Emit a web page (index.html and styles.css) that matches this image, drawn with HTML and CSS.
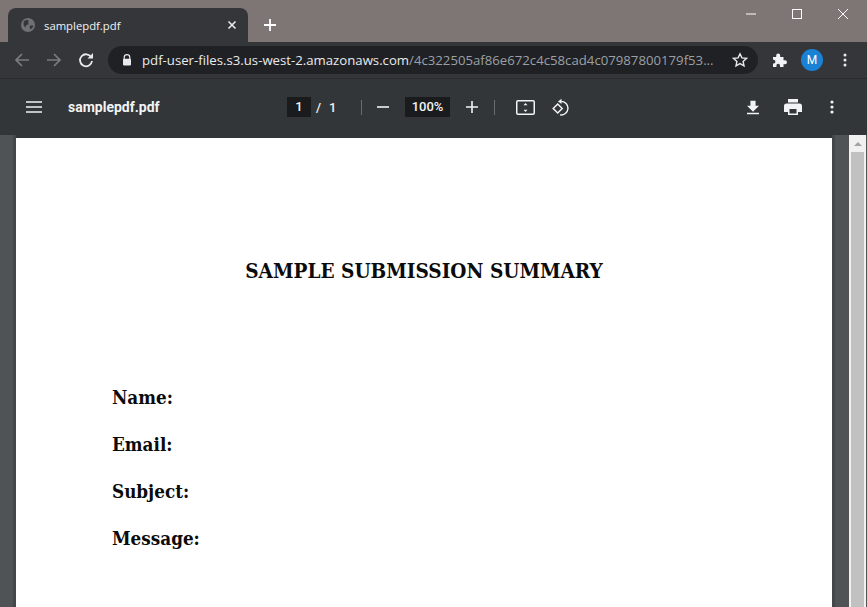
FILE: index.html
```html
<!DOCTYPE html>
<html>
<head>
    <title>samplepdf.pdf</title>
    <link rel="stylesheet" href="styles.css">
</head>
<body>
    <div class="titlebar">
        <div class="tab">
            <svg class="favicon" width="14" height="14" viewBox="0 0 16 16"><circle cx="8" cy="8" r="8" fill="#6f7175"/><path d="M3 4l3-2 3 1-1 2 1 2-3 1-1 3-2-3zM10 9l3-1 1 2-3 3-1-2z" fill="#35363a"/></svg>
            <span class="tab-title">samplepdf.pdf</span>
            <svg class="tab-close" width="10" height="10" viewBox="0 0 10 10"><path d="M1.500 1.500l7 7M8.500 1.500l-7 7" stroke="#e8eaed" stroke-width="1.600"/></svg>
        </div>
        <svg class="new-tab" width="12" height="12" viewBox="0 0 12 12"><path d="M6 0v12M0 6h12" stroke="#fff" stroke-width="1.800"/></svg>
        <div class="window-controls">
            <svg width="10" height="10" viewBox="0 0 10 10"><path d="M0 5h10" stroke="#fff"/></svg>
            <svg width="10" height="10" viewBox="0 0 10 10"><rect x=".5" y=".5" width="9" height="9" fill="none" stroke="#fff"/></svg>
            <svg width="10" height="10" viewBox="0 0 10 10"><path d="M0 0l10 10M10 0L0 10" stroke="#fff"/></svg>
        </div>
    </div>

    <div class="toolbar">
        <svg class="nav-icon" width="16" height="16" viewBox="0 0 16 16"><path d="M15 8H2M8 2L2 8l6 6" fill="none" stroke="#7b7c7f" stroke-width="1.700"/></svg>
        <svg class="nav-icon" width="16" height="16" viewBox="0 0 16 16"><path d="M1 8h13M8 2l6 6-6 6" fill="none" stroke="#7b7c7f" stroke-width="1.700"/></svg>
        <svg class="nav-icon" width="16" height="16" viewBox="0 0 16 16"><path d="M13.200 5.200A6 6 0 1 0 14 9" fill="none" stroke="#e8eaed" stroke-width="1.800"/><path d="M9.500 6.500H15V1z" fill="#e8eaed"/></svg>
        <div class="omnibox">
            <svg class="lock" width="10" height="12" viewBox="0 0 10 12"><path d="M2.200 5V3.400a2.800 2.800 0 0 1 5.600 0V5" fill="none" stroke="#e8eaed" stroke-width="1.200"/><rect x="1" y="4.800" width="8" height="6.600" rx=".8" fill="#e8eaed"/></svg>
            <span class="url"><span class="host">pdf-user-files.s3.us-west-2.amazonaws.com</span>/4c322505af86e672c4c58cad4c07987800179f53...</span>
            <svg width="16" height="16" viewBox="0 0 16 16"><path d="M8 1.800l1.900 4.100 4.500.5-3.300 3 .9 4.400L8 11.600l-4 2.200.9-4.400-3.300-3 4.500-.5z" fill="none" stroke="#e8eaed" stroke-width="1.400"/></svg>
        </div>
        <svg class="puzzle" width="16" height="16" viewBox="0 0 16 16"><path d="M1 5h3.200V3.600a2 2 0 0 1 4 0V5h3.300v3.200H13a2 2 0 0 1 0 4h-1.500V15H8v-1.400a1.800 1.800 0 0 0-3.600 0V15H1v-3.400h1a2 2 0 0 0 0-3.800H1z" fill="#f1f3f4"/></svg>
        <div class="avatar">M</div>
        <svg class="menu-dots" width="4" height="14" viewBox="0 0 4 14"><circle cx="2" cy="2" r="1.500" fill="#e8eaed"/><circle cx="2" cy="7" r="1.500" fill="#e8eaed"/><circle cx="2" cy="12" r="1.500" fill="#e8eaed"/></svg>
    </div>

    <div class="pdf-bar">
        <svg class="hamburger" width="16" height="12" viewBox="0 0 16 12"><path d="M0 1h16M0 6h16M0 11h16" stroke="#f1f3f4" stroke-width="1.600"/></svg>
        <span class="pdf-title">samplepdf.pdf</span>
        <div class="pdf-center">
            <span class="num-box page-box">1</span>
            <span class="page-total"><span>/</span><span>1</span></span>
            <span class="divider first"></span>
            <svg width="12" height="2" viewBox="0 0 12 2"><path d="M0 1h12" stroke="#f1f3f4" stroke-width="1.600"/></svg>
            <span class="num-box zoom-box">100%</span>
            <svg width="12" height="12" viewBox="0 0 12 12"><path d="M6 0v12M0 6h12" stroke="#f1f3f4" stroke-width="1.600"/></svg>
            <span class="divider last"></span>
            <svg class="fit" width="19" height="15" viewBox="0 0 19 15"><rect x=".75" y=".75" width="17.500" height="13.500" rx="1.200" fill="none" stroke="#f1f3f4" stroke-width="1.500"/><path d="M9.500 3l2 2.200h-4zM9.500 12l2-2.200h-4z" fill="#f1f3f4"/></svg>
            <svg class="rotate" width="18" height="18" viewBox="0 0 18 18"><path d="M9 3.400A6.800 6.800 0 1 1 8 16.900" fill="none" stroke="#f1f3f4" stroke-width="1.400"/><path d="M9.500 .8v5.200L6 3.400z" fill="#f1f3f4"/><path d="M1.200 10.500L5.700 6l4.500 4.500-4.500 4.500z" fill="none" stroke="#f1f3f4" stroke-width="1.500"/></svg>
        </div>
        <div class="pdf-right">
            <svg class="download" width="12" height="15" viewBox="0 0 14 16"><path d="M4 0h6v6h4l-7 7-7-7h4zM0 14.200h14V16H0z" fill="#f1f3f4"/></svg>
            <svg class="print" width="18" height="16" viewBox="0 0 18 16"><path d="M4 0h10v3.500H4zM2.500 4.500h13A2.500 2.500 0 0 1 18 7v6h-4v3H4v-3H0V7a2.500 2.500 0 0 1 2.500-2.500zM5.500 10v4.500h7V10z" fill="#f1f3f4" fill-rule="evenodd"/></svg>
            <svg width="4" height="14" viewBox="0 0 4 14"><circle cx="2" cy="2" r="1.600" fill="#f1f3f4"/><circle cx="2" cy="7" r="1.600" fill="#f1f3f4"/><circle cx="2" cy="12" r="1.600" fill="#f1f3f4"/></svg>
        </div>
    </div>

    <div class="viewer">
        <div class="page">
            <h1>SAMPLE SUBMISSION SUMMARY</h1>
            <div class="fields">
                <p>Name:</p>
                <p>Email:</p>
                <p>Subject:</p>
                <p>Message:</p>
            </div>
        </div>
        <div class="scrollbar">
            <div class="arrow"></div>
            <div class="thumb"></div>
        </div>
    </div>
</body>
</html>
```

FILE: styles.css
```css
html, body { margin: 0; height: 100%; overflow: hidden; }
body { display: flex; flex-direction: column; font-family: Roboto, Arial, sans-serif; background: #4f5356; }
svg { display: block; flex: none; }

.titlebar { height: 42px; flex: none; display: flex; align-items: flex-end; background: #7d7675; padding-left: 8px; }
.tab { width: 240px; height: 34px; box-sizing: border-box; display: flex; align-items: center; padding: 0 11px 0 13px; background: #35363a; border-radius: 8px 8px 0 0; }
.tab-title { margin-left: 9px; flex: 1; font-family: "Open Sans", sans-serif; font-size: 11.300px; color: #f1f3f4; }
.new-tab { margin: 0 0 11px 16px; }
.window-controls { margin-left: auto; align-self: flex-start; display: flex; gap: 36px; padding: 9px 19px 0 0; }

.toolbar { height: 37px; box-sizing: border-box; flex: none; display: flex; align-items: center; background: #35363a; border-bottom: 1px solid #2a2b2e; padding-left: 14px; }
.nav-icon { margin-right: 16px; }
.omnibox { width: 650px; height: 28px; margin-left: -2px; box-sizing: border-box; display: flex; align-items: center; padding: 0 10px 0 14px; background: #202124; border-radius: 14px; }
.lock { margin-right: 10px; }
.url { flex: 1; font-family: "Open Sans", sans-serif; font-size: 13.200px; color: #9aa0a6; white-space: nowrap; overflow: hidden; }
.host { color: #e8eaed; }
.puzzle { margin-left: 14px; }
.avatar { width: 22px; height: 22px; margin-left: 13px; border-radius: 50%; background: #1a82d4; color: #fff; font-size: 12px; line-height: 22px; text-align: center; }
.menu-dots { margin-left: 20px; }

.pdf-bar { height: 56px; box-sizing: border-box; flex: none; display: flex; align-items: center; background: #323639; position: relative; z-index: 1; padding-left: 26px; }
.hamburger { margin-right: 26px; }
.pdf-title { width: 219px; font-size: 14px; font-weight: 700; color: #f1f3f4; }
.pdf-center { display: flex; align-items: center; }
.num-box { height: 20px; background: #191b1c; color: #f1f3f4; font-size: 13px; font-weight: 500; line-height: 20px; text-align: center; }
.page-box { width: 24px; }
.page-total { display: flex; gap: 8px; margin-left: 5px; width: 45px; color: #f1f3f4; font-size: 13px; font-weight: 500; }
.divider { width: 1px; height: 15px; background: #6a6d70; }
.divider.first { margin-right: 15px; }
.zoom-box { width: 45px; margin: 0 16px; }
.divider.last { margin: 0 21px 0 16px; }
.rotate { margin-left: 17px; }
.pdf-right { margin-left: auto; display: flex; align-items: center; padding-right: 33px; }
.download { margin-right: 25px; }
.print { margin-right: 28px; }

.viewer { flex: 1; min-height: 0; display: flex; padding-left: 16px; }
.page { width: 816px; box-sizing: border-box; border-top: 3px solid #323639; background: #fff; box-shadow: 0 0 0 3px #43474a; color: #0b0b0b; font-family: "DejaVu Serif Condensed", "DejaVu Serif", serif; font-weight: 700; }
.page h1 { margin: 118px 0 0; font-size: 20.600px; line-height: 30px; text-align: center; }
.fields { margin: 96px 0 0 96px; font-size: 18.700px; }
.fields p { margin: 0 0 17px; line-height: 30px; }
.scrollbar { width: 17px; margin-left: auto; margin-right: 1px; background: #f1f1f1; }
.arrow { width: 0; margin: 7px auto 0; border: 4px solid transparent; border-top: 0; border-bottom: 4px solid #a3a3a3; }
.thumb { height: 100%; margin: 6px 2px 0; background: #c1c1c1; }
```
